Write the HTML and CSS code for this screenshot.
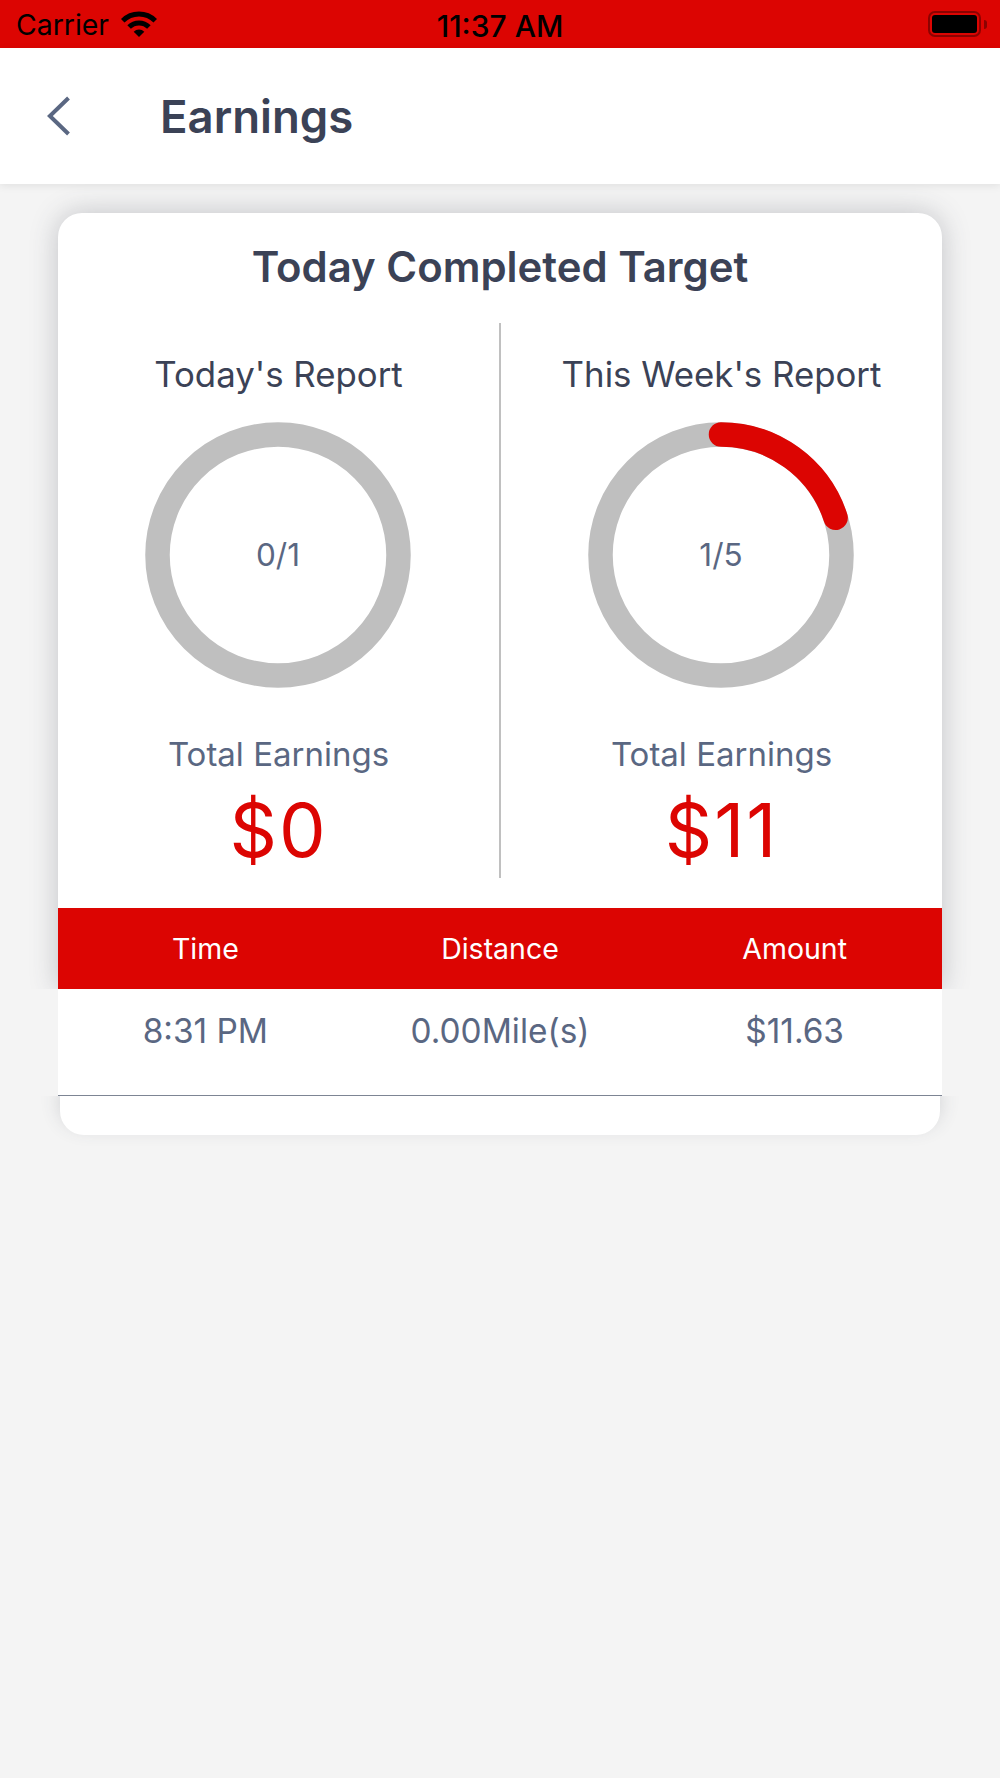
FILE: index.html
```html
<!DOCTYPE html>
<html lang="en">
<head>
    <meta charset="UTF-8">
    <meta name="viewport" content="width=device-width, initial-scale=1.0">
    <title>Earnings</title>
    <link rel="stylesheet" href="styles.css">
</head>
<body>
    <div class="status-bar">
        <div class="status-left">
            <span class="carrier">Carrier</span>
            <svg class="wifi" width="36" height="26" viewBox="0 0 36 26">
                <path d="M1.74 9.74A23 23 0 0 1 34.26 9.74" fill="none" stroke="#000" stroke-width="5"/>
                <path d="M8.1 16.1A14 14 0 0 1 27.9 16.1" fill="none" stroke="#000" stroke-width="5"/>
                <path d="M18 26L12.7 20.7A7.5 7.5 0 0 1 23.3 20.7Z" fill="#000"/>
            </svg>
        </div>
        <div class="clock">11:37 AM</div>
        <div class="status-right">
            <div class="battery"><div class="battery-fill"></div></div>
            <div class="battery-cap"></div>
        </div>
    </div>

    <div class="nav">
        <svg class="back" width="24" height="40" viewBox="0 0 24 40">
            <path d="M21.5 2L2.9 20L21.5 38" fill="none" stroke="#5a6782" stroke-width="4"/>
        </svg>
        <h1 class="nav-title">Earnings</h1>
    </div>

    <div class="card">
        <div class="card-top">
            <h2 class="card-title">Today Completed Target</h2>
            <div class="reports">
                <div class="report">
                    <div class="report-name">Today's Report</div>
                    <div class="ring">
                        <svg width="266" height="266" viewBox="0 0 266 266">
                            <circle cx="133" cy="133" r="120.5" fill="none" stroke="#bfbfbf" stroke-width="24.5"/>
                        </svg>
                        <span class="ring-label">0/1</span>
                    </div>
                    <div class="report-label">Total Earnings</div>
                    <div class="report-amount">$0</div>
                </div>
                <div class="report report-right">
                    <div class="report-name">This Week's Report</div>
                    <div class="ring">
                        <svg width="266" height="266" viewBox="0 0 266 266">
                            <circle cx="133" cy="133" r="120.5" fill="none" stroke="#bfbfbf" stroke-width="24.5"/>
                            <path d="M133 12.5A120.5 120.5 0 0 1 247.6 95.8" fill="none" stroke="#dc0502" stroke-width="24.5" stroke-linecap="round"/>
                        </svg>
                        <span class="ring-label">1/5</span>
                    </div>
                    <div class="report-label">Total Earnings</div>
                    <div class="report-amount">$11</div>
                </div>
            </div>
            <div class="table-head">
                <div>Time</div>
                <div>Distance</div>
                <div>Amount</div>
            </div>
        </div>
        <div class="table-row">
            <div>8:31 PM</div>
            <div>0.00Mile(s)</div>
            <div>$11.63</div>
        </div>
        <div class="card-bottom"></div>
    </div>
</body>
</html>
```

FILE: styles.css
```css
body {
    font-family: 'Inter', 'Liberation Sans', sans-serif;
    margin: 0;
    height: 1778px;
    overflow: hidden;
    background: #f4f4f4;
}

h1, h2 {
    margin: 0;
}

.status-bar {
    display: grid;
    grid-template-columns: 1fr auto 1fr;
    align-items: center;
    height: 48px;
    padding: 0 13px;
    background: #dc0502;
    color: #000;
}

.status-left {
    display: flex;
    align-items: center;
    gap: 12px;
}

.carrier {
    margin-left: 3px;
    padding-top: 2px;
    font-size: 28.4px;
    line-height: 36px;
}

.clock {
    padding-top: 3px;
    font-size: 30px;
    font-weight: 500;
    line-height: 36px;
}

.wifi {
    margin-top: -1px;
}

.status-right {
    display: flex;
    align-items: center;
    justify-content: flex-end;
    gap: 3px;
}

.battery {
    box-sizing: border-box;
    width: 53px;
    height: 26px;
    padding: 2px;
    border: 2px solid #8c0301;
    border-radius: 7px;
}

.battery-fill {
    height: 100%;
    background: #000;
    border-radius: 3px;
}

.battery-cap {
    width: 3px;
    height: 9px;
    background: #8c0301;
    border-radius: 0 3px 3px 0;
}

.nav {
    position: relative;
    z-index: 2;
    display: flex;
    align-items: center;
    height: 136px;
    padding-left: 47px;
    background: #fff;
    box-shadow: 0 2px 8px rgba(0, 0, 0, 0.08);
}

.back {
    display: block;
}

.nav-title {
    margin-left: 89px;
    font-size: 45.5px;
    font-weight: 600;
    color: #3b4256;
}

.card {
    width: 884px;
    margin: 29px auto 0;
}

.card-top {
    background: #fff;
    border-radius: 24px 24px 0 0;
    box-shadow: 0 0 28px rgba(60, 65, 80, 0.28);
    clip-path: inset(-50px -50px 0 -50px);
}

.card-title {
    height: 54px;
    padding-top: 27px;
    font-size: 41.9px;
    font-weight: 600;
    line-height: 54px;
    text-align: center;
    color: #3b4256;
}

.reports {
    display: flex;
    margin-top: 29px;
}

.report {
    flex: 1;
    height: 555px;
    text-align: center;
}

.report-right {
    border-left: 2px solid #c0c0c0;
}

.report-name {
    padding-top: 30px;
    font-size: 34.8px;
    line-height: 42px;
    color: #3b4256;
}

.ring {
    position: relative;
    width: 266px;
    height: 266px;
    margin: 27px 0 0 calc((100% - 267px) / 2);
}

.ring svg {
    display: block;
}

.ring-label {
    position: absolute;
    top: 0;
    left: 0;
    width: 100%;
    font-size: 31.5px;
    line-height: 266px;
    color: #5a6782;
}

.report-label {
    margin-top: 46px;
    font-size: 33px;
    line-height: 40px;
    color: #5a6782;
}

.report-amount {
    margin-top: 14px;
    font-size: 74px;
    letter-spacing: 2px;
    line-height: 84px;
    color: #dc0502;
}

.table-head {
    display: grid;
    grid-template-columns: repeat(3, 1fr);
    align-items: center;
    height: 81px;
    margin-top: 30px;
    background: #dc0502;
    font-size: 28.5px;
    text-align: center;
    color: #fff;
}

.table-row {
    display: grid;
    grid-template-columns: repeat(3, 1fr);
    box-sizing: border-box;
    height: 107px;
    padding-top: 22px;
    background: #fff;
    border-bottom: 1px solid #7d8594;
    font-size: 33.4px;
    line-height: 40px;
    text-align: center;
    color: #5a6782;
}

.card-bottom {
    width: 880px;
    height: 39px;
    margin: 0 auto;
    background: #fff;
    border-radius: 0 0 24px 24px;
    box-shadow: 0 -8px 20px rgba(60, 65, 80, 0.2);
    clip-path: inset(0 -40px -40px -40px);
}
```
